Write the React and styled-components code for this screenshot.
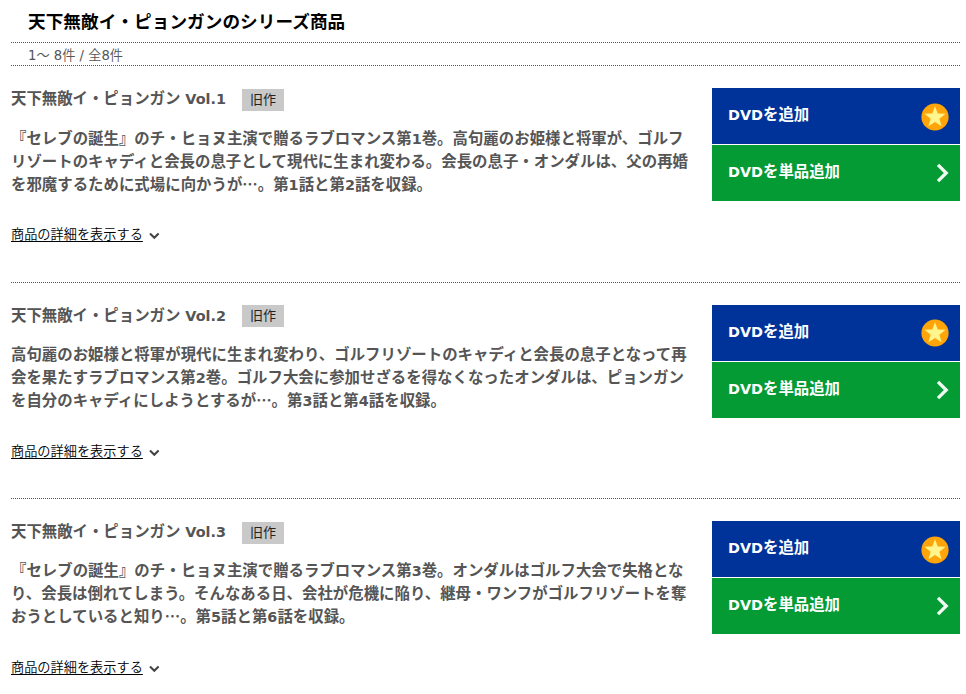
import React from 'react';
import styled, { createGlobalStyle } from 'styled-components';

const GlobalStyle = createGlobalStyle`
  * {
    box-sizing: border-box;
    margin: 0;
    padding: 0;
  }
  body {
    background: #fff;
    color: #555;
    font-family: 'Noto Sans CJK JP', sans-serif;
    text-spacing-trim: space-all;
    overflow: hidden;
  }
`;

const Page = styled.main`
  width: 960px;
  padding-left: 11px;
`;

const Heading = styled.h1`
  height: 42px;
  padding-left: 17px;
  color: #000;
  font-size: 17.6px;
  letter-spacing: 0.08px;
  line-height: 42px;
`;

const Count = styled.p`
  height: 24px;
  padding-left: 17px;
  border-top: 1px dotted #555;
  border-bottom: 1px dotted #555;
  font-size: 13.2px;
  font-weight: 350;
  line-height: 23px;
  white-space: pre;
  span {
    font-family: 'DejaVu Sans', sans-serif;
    font-size: 13.2px;
    font-weight: 400;
    line-height: 1;
  }
`;

const List = styled.ul`
  padding-top: 0.2px;
  list-style: none;
`;

const Item = styled.li`
  display: flex;
  justify-content: space-between;
  height: 216.4px;
  padding-top: 22px;
  border-bottom: 1px dotted #555;
`;

const Info = styled.div`
  width: 690px;
`;

const TitleRow = styled.div`
  display: flex;
  align-items: flex-start;
  height: 37.4px;
`;

const Title = styled.h2`
  width: 231px;
  font-size: 15.4px;
  line-height: 18px;
  white-space: pre;
`;

const Badge = styled.span`
  width: 42px;
  height: 22px;
  margin-top: 0.8px;
  background: #c9c9c9;
  color: #222;
  font-size: 13px;
  font-weight: 400;
  line-height: 20px;
  text-align: center;
`;

const Latin = styled.span`
  font-family: 'DejaVu Sans', sans-serif;
  font-size: 0.935em;
  line-height: 1;
`;

const Description = styled.p`
  height: 98.6px;
  font-size: 15.4px;
  font-weight: 700;
  letter-spacing: 0.03px;
  line-height: 23px;
  white-space: nowrap;
`;

const Detail = styled.a`
  display: flex;
  align-items: center;
  gap: 6px;
  height: 20px;
  color: #000;
  font-size: 13.2px;
  font-weight: 350;
  line-height: 20px;
  span {
    text-decoration: underline;
    text-decoration-thickness: 1px;
    text-underline-offset: 2px;
  }
  svg {
    margin-top: 4px;
  }
`;

const Actions = styled.div`
  display: flex;
  flex-direction: column;
  gap: 1px;
  width: 248px;
`;

const Button = styled.button`
  display: flex;
  align-items: flex-start;
  justify-content: space-between;
  height: 56px;
  padding: 0 11px 0 16px;
  border: 0;
  background: ${({ $color }) => $color};
  color: #fff;
  font: 700 15.4px/50px 'Noto Sans CJK JP', sans-serif;
  span {
    padding-top: 0.2px;
  }
  svg {
    margin-top: ${({ $iconTop }) => $iconTop}px;
  }
`;

const items = [
  {
    vol: 1,
    lines: [
      '『セレブの誕生』のチ・ヒョヌ主演で贈るラブロマンス第1巻。高句麗のお姫様と将軍が、ゴルフ',
      'リゾートのキャディと会長の息子として現代に生まれ変わる。会長の息子・オンダルは、父の再婚',
      'を邪魔するために式場に向かうが…。第1話と第2話を収録。',
    ],
  },
  {
    vol: 2,
    lines: [
      '高句麗のお姫様と将軍が現代に生まれ変わり、ゴルフリゾートのキャディと会長の息子となって再',
      '会を果たすラブロマンス第2巻。ゴルフ大会に参加せざるを得なくなったオンダルは、ピョンガン',
      'を自分のキャディにしようとするが…。第3話と第4話を収録。',
    ],
  },
  {
    vol: 3,
    lines: [
      '『セレブの誕生』のチ・ヒョヌ主演で贈るラブロマンス第3巻。オンダルはゴルフ大会で失格とな',
      'り、会長は倒れてしまう。そんなある日、会社が危機に陥り、継母・ワンフがゴルフリゾートを奪',
      'おうとしていると知り…。第5話と第6話を収録。',
    ],
  },
];

// digits and roman letters use a wider face than the kana
const Mixed = ({ text }) =>
  text
    .split(/([A-Za-z0-9.]+)/)
    .map((part, i) => (i % 2 ? <Latin key={i}>{part}</Latin> : part));

const StarIcon = () => (
  <svg width="28" height="28" viewBox="0 0 28 28">
    <circle cx="14" cy="14" r="13.6" fill="#ffa50a" />
    <path
      d="M14 3.2l2.7 7.4 7.9.2-6.2 4.9 2.2 7.6-6.6-4.4-6.6 4.4 2.2-7.6-6.2-4.9 7.9-.2z"
      fill="#fff58c"
    />
  </svg>
);

const ArrowIcon = () => (
  <svg width="13" height="20" viewBox="0 0 13 20">
    <path d="M2 1.9L10.2 10L2 18.1" fill="none" stroke="#f2fbf3" strokeWidth="3.3" />
  </svg>
);

const DownIcon = () => (
  <svg width="11" height="8" viewBox="0 0 11 8">
    <path d="M1 1.5L5.3 5.7L9.6 1.5" fill="none" stroke="#444" strokeWidth="2.1" />
  </svg>
);

const SeriesItem = ({ item }) => (
  <Item>
    <Info>
      <TitleRow>
        <Title>
          天下無敵イ・ピョンガン<Latin> Vol.{item.vol}</Latin>
        </Title>
        <Badge>旧作</Badge>
      </TitleRow>
      <Description>
        {item.lines.map((line) => (
          <React.Fragment key={line}>
            <Mixed text={line} />
            <br />
          </React.Fragment>
        ))}
      </Description>
      <Detail>
        <span>商品の詳細を表示する</span>
        <DownIcon />
      </Detail>
    </Info>
    <Actions>
      <Button $color="#003399" $iconTop={14.6}>
        <span>
          <Mixed text="DVDを追加" />
        </span>
        <StarIcon />
      </Button>
      <Button $color="#049a34" $iconTop={18}>
        <span>
          <Mixed text="DVDを単品追加" />
        </span>
        <ArrowIcon />
      </Button>
    </Actions>
  </Item>
);

const App = () => (
  <>
    <GlobalStyle />
    <Page lang="ja">
      <Heading>天下無敵イ・ピョンガンのシリーズ商品</Heading>
      <Count>
        <span>1</span>〜<span> 8</span>件<span> / </span>全<span>8</span>件
      </Count>
      <List>
        {items.map((item) => (
          <SeriesItem key={item.vol} item={item} />
        ))}
      </List>
    </Page>
  </>
);

export default App;
